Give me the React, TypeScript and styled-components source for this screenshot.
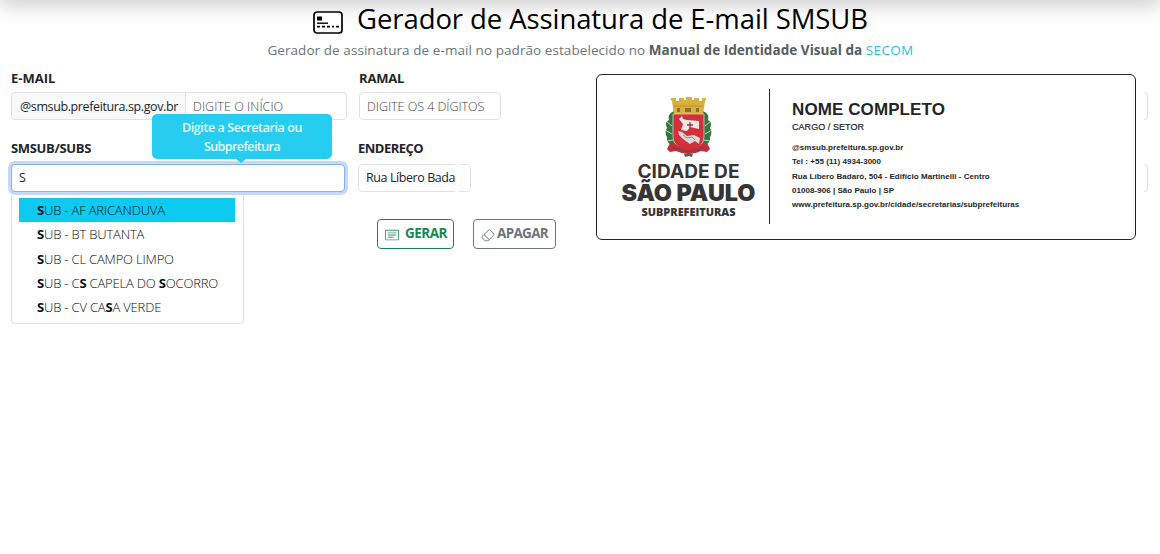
import React from "react";
import styled, { createGlobalStyle } from "styled-components";
import { BsCardText, BsEraser } from "react-icons/bs";

const Global = createGlobalStyle`
  *, *::before, *::after { box-sizing: border-box; }
  html, body { margin: 0; background: #fff; }
  body {
    font-family: "Open Sans", "Noto Sans", sans-serif;
    font-size: 12.5px;
    font-weight: 400;
    color: #212529;
  }
`;

const Page = styled.div`
  height: 554px;
  overflow: hidden;
  white-space: nowrap;
`;

const TopBar = styled.div`
  height: 50px;
  margin-top: -50px;
  box-shadow: 0 8px 16px rgba(0, 0, 0, 0.16);
`;

const Header = styled.header`
  display: flex;
  flex-direction: column;
  align-items: center;
  padding-left: 21px;
  height: 64px;
`;

const TitleRow = styled.div`
  display: flex;
  align-items: center;
  gap: 14px;
  height: 38px;
  margin-bottom: 1px;
`;

const TitleIcon = styled.svg`
  display: block;
  margin-top: 6px;
`;

const Title = styled.h1`
  margin: 0;
  font-size: 27.5px;
  font-weight: 400;
  line-height: 38px;
  letter-spacing: -0.09px;
  color: #000;
`;

const Subtitle = styled.p`
  margin: 1px 0 0;
  font-size: 13.5px;
  line-height: 20px;
  letter-spacing: 0.07px;
  color: #6c757d;

  b { color: #565c61; letter-spacing: 0.05px; }
`;

const Link = styled.a`
  color: #23c3e8;
  font-weight: 500;
  letter-spacing: 0.35px;
`;

const Content = styled.main`
  display: flex;
  align-items: flex-start;
  padding-left: 11px;
`;

const Form = styled.form`
  width: 585px;
  padding-top: 4px;
`;

const FormRow = styled.div<{ $gap: number }>`
  display: flex;
  align-items: flex-start;
  gap: ${(p) => p.$gap}px;
`;

const Field = styled.div<{ $width: number; $space: number }>`
  position: relative;
  width: ${(p) => p.$width}px;
  padding-top: ${(p) => p.$space}px;
`;

const Label = styled.label<{ $track?: number; $gap: number }>`
  display: block;
  font-size: 13px;
  font-weight: 700;
  line-height: 20px;
  letter-spacing: ${(p) => p.$track ?? 0}px;
  margin-bottom: ${(p) => p.$gap}px;
`;

const Control = styled.div<{ $track: number; $muted?: boolean; $focus?: boolean; $clipped?: boolean }>`
  position: relative;
  display: flex;
  align-items: center;
  height: 28px;
  padding: 0 7px ${(p) => (p.$muted ? 0 : 1)}px;
  border: 1px solid ${(p) => (p.$focus ? "#86b0ef" : "#dee2e6")};
  border-radius: 4px;
  background: #fff;
  font-weight: ${(p) => (p.$muted ? 300 : 400)};
  letter-spacing: ${(p) => p.$track}px;
  color: ${(p) => (p.$muted ? "#3f454b" : "#212529")};
  box-shadow: ${(p) => (p.$focus ? "0 0 0 3px #c5d9fb" : "none")};

  &::after {
    content: "";
    display: ${(p) => (p.$clipped ? "block" : "none")};
    position: absolute;
    top: -1px;
    right: 11px;
    width: 4px;
    height: 28px;
    background: #fff;
  }
`;

const Group = styled.div`
  display: flex;

  ${Control} {
    flex: 1;
    border-radius: 0 4px 4px 0;
    border-left: 0;
  }
`;

const Addon = styled.span`
  display: flex;
  align-items: center;
  width: 175px;
  height: 28px;
  padding: 0 0 0 8px;
  border: 1px solid #dee2e6;
  border-radius: 4px 0 0 4px;
  background: #f8f9fa;
  letter-spacing: -0.385px;
`;

const Tooltip = styled.div`
  position: absolute;
  z-index: 3;
  left: 141px;
  top: -6px;
  width: 180px;
  height: 45px;
  padding-top: 4px;
  border-radius: 5px;
  background: #26cdf1;
  color: #e9faff;
  font-weight: 600;
  line-height: 19px;
  letter-spacing: -0.41px;
  text-align: center;

  &::after {
    content: "";
    position: absolute;
    left: 84px;
    top: 45px;
    border: 5px solid transparent;
    border-top: 4px solid #26cdf1;
    border-bottom: 0;
  }
`;

const TightLine = styled.div`
  letter-spacing: -0.58px;
`;

const Menu = styled.ul`
  position: absolute;
  z-index: 1;
  left: 0;
  top: 75px;
  width: 233px;
  height: 129px;
  margin: 0;
  padding: 3px 8px 0 7px;
  list-style: none;
  border: 1px solid #dee2e6;
  border-top: 0;
  border-radius: 0 0 4px 4px;
  background: #fff;
`;

const Option = styled.li<{ $active?: boolean }>`
  height: 24.3px;
  padding-left: 18px;
  font-size: 13px;
  font-weight: 300;
  line-height: 24px;
  letter-spacing: -0.18px;
  color: #0b0e11;
  background: ${(p) => (p.$active ? "#0dcaf0" : "transparent")};

  b { font-weight: 700; }
`;

const Buttons = styled.div`
  display: flex;
  gap: 19px;
  padding: 27px 0 0 366px;
`;

const Button = styled.button<{ $width: number; $color: string; $track: number; $gap: number }>`
  display: flex;
  align-items: center;
  gap: ${(p) => p.$gap}px;
  width: ${(p) => p.$width}px;
  height: 30px;
  padding: 0 0 2px 7px;
  border: 1px solid ${(p) => p.$color};
  border-radius: 4px;
  background: #fff;
  color: ${(p) => p.$color};
  font: 700 13.5px "Open Sans", sans-serif;
  letter-spacing: ${(p) => p.$track}px;

  svg { margin-top: 3px; opacity: 0.85; }
`;

const Card = styled.section`
  display: flex;
  align-items: flex-start;
  width: 540px;
  height: 166px;
  margin-top: 10px;
  padding: 14px 0 0 23px;
  border: 1px solid #212529;
  border-radius: 6px;
`;

const LogoPane = styled.div`
  width: 150px;
  height: 135px;
  border-right: 1px solid #212529;
`;

const Signature = styled.div`
  padding: 10px 0 0 22px;
  font-family: "Liberation Sans", Arial, sans-serif;
`;

const Name = styled.div`
  font-size: 17px;
  font-weight: 700;
  line-height: 22px;
  letter-spacing: 0.1px;
`;

const Role = styled.div`
  font-size: 9px;
  line-height: 12px;
  letter-spacing: 0.05px;
  margin-bottom: 8px;
  -webkit-text-stroke: 0.2px #212529;
`;

const Detail = styled.div`
  font-size: 8px;
  font-weight: 700;
  line-height: 14.3px;
  letter-spacing: 0.04px;
`;

const FieldEnds = styled.div`
  display: flex;
  flex-direction: column;
  gap: 44px;
  padding: 28px 0 0 8px;
`;

const FieldEnd = styled.span`
  width: 4px;
  height: 28px;
  border: 1px solid #dee2e6;
  border-left: 0;
  border-radius: 0 4px 4px 0;
`;

const options = [
  "SUB - AF ARICANDUVA",
  "SUB - BT BUTANTA",
  "SUB - CL CAMPO LIMPO",
  "SUB - CS CAPELA DO SOCORRO",
  "SUB - CV CASA VERDE",
];

function Highlighted({ text }: { text: string }) {
  return <>{text.split(/(S)/).map((part, i) => (part === "S" ? <b key={i}>S</b> : part))}</>;
}

function Logo() {
  return (
    <svg width="145" height="135" viewBox="620 89 145 135">
      <g>
        <path d="M674 111q-7 3-5 9-5 2-2 8-3 4 0 9-1 6 5 8l9 3V112zM703 111q7 3 5 9 5 2 2 8 3 4 0 9 1 6-5 8l-9 3V112z" fill="#35763f" />
        <path d="M666 121l6 5M665 130l7 4M667 141l6-1M711 121l-6 5M712 130l-7 4M710 141l-6-1" stroke="#fff" strokeWidth="0.7" />
        <path d="M674 115l-2-14-1-1v-2h5v3h3v-3h5v2h2v-3h6v3h2v-2h5v3h3v-3h4v2l-1 1-2 14z" fill="#d9b13f" />
        <path d="M674 106h29" stroke="#b48c2b" strokeWidth=".8" />
        <path d="M677 108h3v4h-3zM685 108h6v4h-6zM696 108h3v4h-3z" fill="#8d7030" />
        <path d="M673 114h31v23q0 10-15.500 15-15.500-5-15.500-15z" fill="#d4303c" stroke="#e6c9c4" strokeWidth=".8" />
        <path d="M679 119l3-3 1 3 4 1 12 1v8l-9-2-3 4-6-1 2-6z" fill="#eee7e4" />
        <path d="M687 125h6M690 122v6" stroke="#8f3a42" strokeWidth="1.300" />
        <path d="M678 131l4 1 5 4 7-1 6 3-1 6-4-3-5 3-7-5-4-4z" fill="#dcd8d6" />
        <path d="M683 135l4 3 5-1 3 3" stroke="#96898a" fill="none" />
        <path d="M667 149l3-6 5 1q6 5 13.500 5t13.500-5l5-1 3 6-3 3-6-1q-12 6-25 0l-6 1z" fill="#c02f3a" />
        <path d="M673 148q15 7 31 0" stroke="#7d4249" strokeWidth="1.100" fill="none" />
        <path d="M684 154l4-1 5 1-1 3-3-1-4 1z" fill="#4a6b3f" />
      </g>
      <g fill="#373435">
        <text x="637.500" y="177.500" fontFamily="Inter" fontWeight="700" fontSize="18.500" textLength="102" lengthAdjust="spacingAndGlyphs">CIDADE DE</text>
        <text x="621.500" y="200.500" fontFamily="Inter" fontWeight="900" fontSize="22.500" textLength="134" lengthAdjust="spacingAndGlyphs">SÃO PAULO</text>
        <text x="641.500" y="215.500" fontFamily="Open Sans" fontWeight="800" fontSize="10.500" textLength="94" lengthAdjust="spacingAndGlyphs">SUBPREFEITURAS</text>
      </g>
    </svg>
  );
}

export default function App() {
  return (
    <Page>
      <Global />
      <TopBar />
      <Header>
        <TitleRow>
          <TitleIcon width="30" height="23" viewBox="0 0 30 23">
            <rect x="1" y="1" width="28" height="21" rx="3" fill="#fff" stroke="#000" strokeWidth="1.700" />
            <path d="M4 5.500h5v4H4z" />
            <path d="M4 12.200h11" stroke="#000" strokeWidth="1.400" />
            <path d="M4 15.700h3M9 15.700h3M14 15.700h3M19 15.700h2M23 15.700h3" stroke="#000" strokeWidth="1.700" />
          </TitleIcon>
          <Title>Gerador de Assinatura de E-mail SMSUB</Title>
        </TitleRow>
        <Subtitle>
          Gerador de assinatura de e-mail no padrão estabelecido no <b>Manual de Identidade Visual da</b>{" "}
          <Link>SECOM</Link>
        </Subtitle>
      </Header>
      <Content>
        <Form>
          <FormRow $gap={12}>
            <Field $width={336} $space={0}>
              <Label $gap={4}>E-MAIL</Label>
              <Group>
                <Addon>@smsub.prefeitura.sp.gov.br</Addon>
                <Control $track={0.05} $muted>DIGITE O INÍCIO</Control>
              </Group>
            </Field>
            <Field $width={142} $space={0}>
              <Label $gap={4} $track={-0.2}>RAMAL</Label>
              <Control $track={-0.03} $muted>DIGITE OS 4 DÍGITOS</Control>
            </Field>
          </FormRow>
          <FormRow $gap={13}>
            <Field $width={334} $space={18}>
              <Label $gap={6} $track={-0.34}>SMSUB/SUBS</Label>
              <Control $track={0} $focus>S</Control>
              <Tooltip>
                Digite a Secretaria ou
                <TightLine>Subprefeitura</TightLine>
              </Tooltip>
              <Menu>
                {options.map((o, i) => (
                  <Option key={o} $active={i === 0}><Highlighted text={o} /></Option>
                ))}
              </Menu>
            </Field>
            <Field $width={113} $space={18}>
              <Label $gap={6} $track={-0.53}>ENDEREÇO</Label>
              <Control $track={-0.42} $clipped>Rua Líbero Bada</Control>
            </Field>
          </FormRow>
          <Buttons>
            <Button type="button" $width={77} $color="#198754" $track={-0.5} $gap={6}>
              <BsCardText size={14} />GERAR
            </Button>
            <Button type="button" $width={83} $color="#6c757d" $track={-0.68} $gap={2}>
              <BsEraser size={14} />APAGAR
            </Button>
          </Buttons>
        </Form>
        <Card>
          <LogoPane><Logo /></LogoPane>
          <Signature>
            <Name>NOME COMPLETO</Name>
            <Role>CARGO / SETOR</Role>
            <Detail>@smsub.prefeitura.sp.gov.br</Detail>
            <Detail>Tel : +55 (11) 4934-3000</Detail>
            <Detail>Rua Líbero Badaró, 504 - Edifício Martinelli - Centro</Detail>
            <Detail>01008-906 | São Paulo | SP</Detail>
            <Detail>www.prefeitura.sp.gov.br/cidade/secretarias/subprefeituras</Detail>
          </Signature>
        </Card>
        <FieldEnds><FieldEnd /><FieldEnd /></FieldEnds>
      </Content>
    </Page>
  );
}
